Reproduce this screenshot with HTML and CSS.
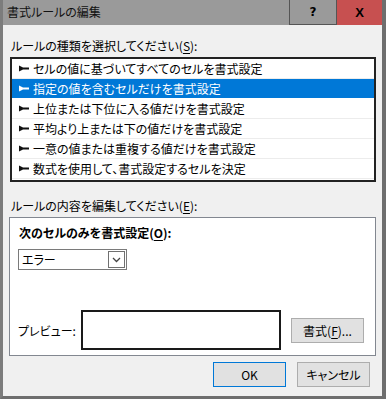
FILE: index.html
```html
<!DOCTYPE html>
<html lang="ja">
<head>
  <meta charset="UTF-8">
  <title>書式ルールの編集</title>
  <link rel="stylesheet" href="styles.css">
</head>
<body>

  <div class="window">
    <div class="titlebar">
      <div class="title">書式ルールの編集</div>
      <div class="tb-help">?</div>
      <div class="tb-close">X</div>
    </div>

    <div class="dialog">
      <div class="label">ルールの種類を選択してください(<u>S</u>):</div>

      <div class="rule-list">
        <div class="rule"><svg class="pin" width="10" height="7" viewBox="0 0 10 7"><polygon points="0,0.5 4,2.5 10,2.5 10,4.5 4,4.5 0,6.5"/></svg>セルの値に基づいてすべてのセルを書式設定</div>
        <div class="rule selected"><svg class="pin" width="10" height="7" viewBox="0 0 10 7"><polygon points="0,0.5 4,2.5 10,2.5 10,4.5 4,4.5 0,6.5"/></svg>指定の値を含むセルだけを書式設定</div>
        <div class="rule"><svg class="pin" width="10" height="7" viewBox="0 0 10 7"><polygon points="0,0.5 4,2.5 10,2.5 10,4.5 4,4.5 0,6.5"/></svg>上位または下位に入る値だけを書式設定</div>
        <div class="rule"><svg class="pin" width="10" height="7" viewBox="0 0 10 7"><polygon points="0,0.5 4,2.5 10,2.5 10,4.5 4,4.5 0,6.5"/></svg>平均より上または下の値だけを書式設定</div>
        <div class="rule"><svg class="pin" width="10" height="7" viewBox="0 0 10 7"><polygon points="0,0.5 4,2.5 10,2.5 10,4.5 4,4.5 0,6.5"/></svg>一意の値または重複する値だけを書式設定</div>
        <div class="rule"><svg class="pin" width="10" height="7" viewBox="0 0 10 7"><polygon points="0,0.5 4,2.5 10,2.5 10,4.5 4,4.5 0,6.5"/></svg>数式を使用して、書式設定するセルを決定</div>
      </div>

      <div class="label label-edit">ルールの内容を編集してください(<u>E</u>):</div>

      <div class="panel">
        <div class="panel-title">次のセルのみを書式設定(<u>O</u>):</div>
        <div class="select">
          <span class="select-text">エラー</span>
          <span class="select-btn">
            <svg width="9" height="6" viewBox="0 0 9 6"><path d="M1 1 L4.5 4.5 L8 1" fill="none" stroke="#444" stroke-width="1.3"/></svg>
          </span>
        </div>
        <div class="preview-row">
          <div class="preview-label">プレビュー:</div>
          <div class="preview-box"></div>
          <div class="btn btn-format">書式(<u>F</u>)...</div>
        </div>
      </div>

      <div class="footer">
        <div class="btn btn-ok">OK</div>
        <div class="btn">キャンセル</div>
      </div>
    </div>
  </div>

</body>
</html>
```

FILE: styles.css
```css
body {
  margin: 0;
  background: #999;
  font-family: "Noto Sans CJK JP", "Noto Sans", sans-serif;
  font-size: 12px;
  font-feature-settings: "palt";
  color: #000;
}

.window {
  width: 386px;
  height: 399px;
  box-sizing: border-box;
  background: #9a9a9a;
  border-left: 3px solid #7c7c7c;
  border-right: 4px solid #6e6e6e;
  border-bottom: 3px solid #6e6e6e;
  display: flex;
  flex-direction: column;
}

.titlebar {
  height: 25px;
  display: flex;
  align-items: stretch;
  flex-shrink: 0;
}

.title {
  flex: 1;
  padding-left: 4px;
  line-height: 24px;
  font-size: 12px;
  color: #111;
}

.tb-help, .tb-close {
  display: flex;
  justify-content: center;
  align-items: center;
  font-family: "DejaVu Sans", sans-serif;
  font-weight: bold;
  font-size: 12px;
}

.tb-help {
  width: 46px;
  border: 1px solid #555;
  border-top: none;
}

.tb-close {
  width: 45px;
  background: #c75050;
  font-family: "Liberation Sans", sans-serif;
  font-size: 13px;
}

.dialog {
  flex: 1;
  background: #f0f0f0;
  display: flex;
  flex-direction: column;
}

.label {
  line-height: 16px;
  padding: 13px 0 0 8px;
}

.label-edit {
  padding-top: 16px;
}

u {
  text-decoration-thickness: 1px;
  text-underline-offset: 2px;
}

.rule-list {
  margin: 3px 0 0 7px;
  width: 366px;
  height: 125px;
  box-sizing: border-box;
  background: #fff;
  border: 2px solid #222;
}

.rule {
  height: 19px;
  border-bottom: 1px solid #ececec;
  display: flex;
  align-items: center;
  padding-left: 7px;
  line-height: 19px;
}

.rule .pin {
  fill: #111;
  margin-right: 4px;
}

.rule.selected {
  background: #0078d7;
  color: #fff;
  border-bottom-color: #fff;
}

.rule.selected .pin {
  fill: #fff;
}

.panel {
  margin: 3px 0 0 6px;
  width: 367px;
  height: 139px;
  box-sizing: border-box;
  background: #fff;
  border: 1px solid #828790;
  padding: 7px 0 0 8px;
}

.panel-title {
  font-weight: bold;
  line-height: 16px;
  padding-left: 1px;
}

.select {
  margin-top: 8px;
  width: 109px;
  height: 21px;
  box-sizing: border-box;
  border: 1px solid #7a7a7a;
  display: flex;
  align-items: center;
  justify-content: space-between;
}

.select-text {
  padding-left: 3px;
}

.select-btn {
  width: 17px;
  height: 17px;
  margin-right: 1px;
  box-sizing: border-box;
  border: 1px solid #707070;
  display: flex;
  justify-content: center;
  align-items: center;
}

.preview-row {
  margin-top: 40px;
  display: flex;
  align-items: center;
}

.preview-label {
  width: 63px;
}

.preview-box {
  width: 200px;
  height: 40px;
  box-sizing: border-box;
  border: 2px solid #1a1a1a;
  margin-right: 10px;
}

.btn {
  width: 73px;
  height: 25px;
  box-sizing: border-box;
  background: #e1e1e1;
  border: 1px solid #adadad;
  display: flex;
  justify-content: center;
  align-items: center;
}

.btn-ok {
  border-color: #0078d7;
}

.footer {
  display: flex;
  justify-content: flex-end;
  gap: 11px;
  margin: 6px 12px 0 0;
}
```
